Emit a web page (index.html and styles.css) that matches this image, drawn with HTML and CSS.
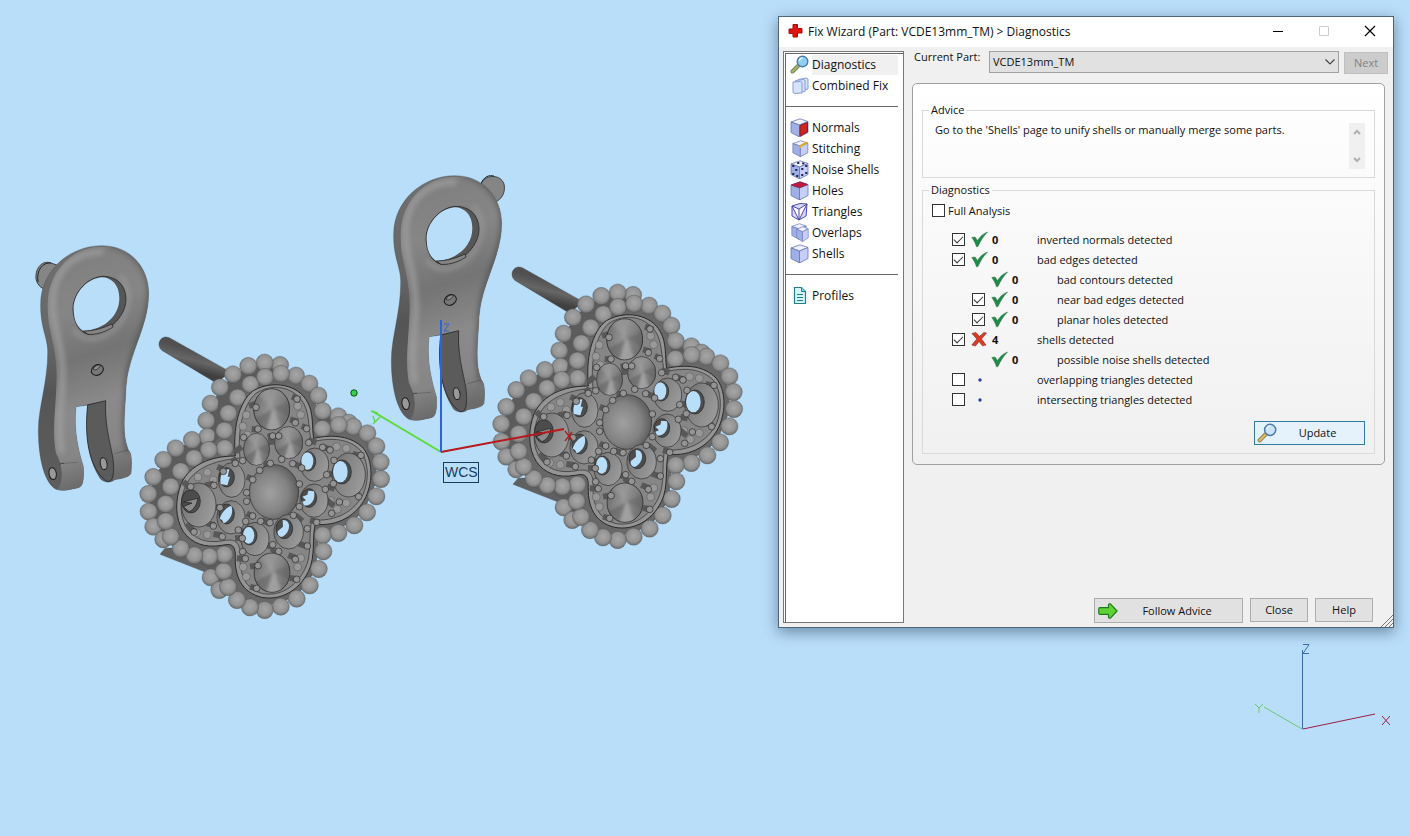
FILE: index.html
```html
<!DOCTYPE html>
<html lang="en">
<head>
<meta charset="utf-8">
<title>Fix Wizard</title>
<link rel="stylesheet" href="styles.css">
</head>
<body>
<main class="viewport">
<svg class="scene" width="1410" height="836" viewBox="0 0 1410 836" aria-label="Model view">
  <defs>
    <radialGradient id="bead" cx=".5" cy=".45" r=".6"><stop offset="0" stop-color="#a6a6a6"/><stop offset=".6" stop-color="#949494"/><stop offset=".85" stop-color="#767676"/><stop offset="1" stop-color="#555858"/></radialGradient>
    <radialGradient id="dome" cx=".42" cy=".52" r=".62"><stop offset="0" stop-color="#a0a0a0"/><stop offset=".6" stop-color="#828282"/><stop offset="1" stop-color="#555"/></radialGradient>
    <linearGradient id="cone" x1="0" y1=".3" x2="1" y2=".6"><stop offset="0" stop-color="#6e6e6e"/><stop offset=".45" stop-color="#949494"/><stop offset=".7" stop-color="#828282"/><stop offset="1" stop-color="#6c6c6c"/></linearGradient>
    <linearGradient id="cup" x1="0" y1="0" x2="1" y2=".5"><stop offset="0" stop-color="#6c6c6c"/><stop offset=".5" stop-color="#858585"/><stop offset="1" stop-color="#999"/></linearGradient>
    <linearGradient id="post" x1=".55" y1=".3" x2=".4" y2=".7"><stop offset="0" stop-color="#505050"/><stop offset=".5" stop-color="#666"/><stop offset="1" stop-color="#404040"/></linearGradient>
    <linearGradient id="face" x1="0" y1="0" x2=".15" y2="1"><stop offset="0" stop-color="#7c7c7c"/><stop offset=".3" stop-color="#868686"/><stop offset=".5" stop-color="#747474"/><stop offset=".7" stop-color="#8a8a8a"/><stop offset=".88" stop-color="#868686"/><stop offset="1" stop-color="#6b6b6b"/></linearGradient>
    <linearGradient id="side" x1="0" y1="0" x2="0" y2="1"><stop offset="0" stop-color="#707070"/><stop offset=".4" stop-color="#666"/><stop offset=".6" stop-color="#555"/><stop offset="1" stop-color="#5e5e5e"/></linearGradient>
    <filter id="soft" x="-20%" y="-20%" width="140%" height="140%"><feGaussianBlur stdDeviation="8"/></filter>
    <filter id="haze" x="-20%" y="-20%" width="140%" height="140%"><feGaussianBlur stdDeviation="5"/></filter>
    <clipPath id="leverClip"><path d="M245 50C330 50 385 110 386 190C386 290 325 370 318 470C314 560 305 610 325 660C335 670 336 690 333 730C325 745 300 745 281 750C281 700 257 640 257 512L168 530C160 600 175 660 190 710C192 745 190 770 175 773C150 778 130 785 112 779C135 750 125 700 108 670C95 600 108 540 110 440C110 340 80 300 83 220C86 120 160 50 245 50Z"/></clipPath>
    <clipPath id="coneClip"><ellipse cx="56" cy="64" rx="55" ry="63"/></clipPath>

    <symbol id="conic" viewBox="0 0 112 128" preserveAspectRatio="none">
      <ellipse fill="url(#cone)" cx="56" cy="64" rx="55" ry="63"/>
      <g clip-path="url(#coneClip)"><g filter="url(#haze)">
        <path fill="#585858" opacity=".5" d="M60 62L-10 100L30 150Z"/>
        <path fill="#b0b0b0" opacity=".6" d="M60 55L40 140L92 140Z"/>
        <path fill="#606060" opacity=".45" d="M60 60L130 30L130 100Z"/>
        <path fill="#a0a0a0" opacity=".5" d="M60 62L0 0L50 -20Z"/>
      </g></g>
      <ellipse fill="none" stroke="#2b2b2b" stroke-width="2.500" cx="56" cy="64" rx="54" ry="62"/>
    </symbol>

    <symbol id="lever" viewBox="0 0 450 810">
      <path class="edge" fill="url(#side)" d="M245 47C330 47 385 110 386 190C386 290 325 370 318 470C314 560 305 610 325 660C335 670 336 690 333 730C325 745 300 745 283 750C275 758 250 760 240 745C205 690 195 620 203 525L168 530C160 600 175 660 190 710C192 745 190 770 175 773C150 778 130 785 108 778C75 760 55 690 55 600C55 530 85 450 83 360C82 320 60 290 62 220C64 120 150 47 245 47Z"/>
      <g clip-path="url(#leverClip)">
        <path fill="url(#face)" d="M60 40H400V790H60Z"/>
        <path class="shine" d="M250 66C150 66 98 130 98 220C98 300 130 340 128 440C126 530 110 590 126 670"/>
        <path class="halo" d="M300 135C350 190 325 300 230 325C200 330 175 320 160 300"/>
        <path class="rimdark" d="M270 44C350 60 394 130 388 200C384 290 324 370 320 470C316 560 307 610 325 665"/>
      </g>
      <path class="line" fill="#5b5b5b" d="M203 525L257 512C252 600 280 660 281 710C281 735 278 756 262 755C215 725 190 640 203 525Z"/>
      <path class="line" fill="#565656" d="M159 240C157 195 195 145 245 139C290 138 318 165 318 210C316 262 262 312 205 313C175 306 162 275 159 240Z"/>
      <path fill="#b9defa" d="M161 240C159 195 196 147 245 142C275 142 298 165 298 205C298 260 250 300 190 303C170 290 162 270 161 240Z"/>
      <path class="line" fill="#858585" d="M190 303C225 303 255 292 276 282L279 291C250 310 225 314 204 313Z"/>
      <ellipse class="line thick" fill="#777" cx="232" cy="420" rx="19" ry="15" transform="rotate(-32 232 420)"/>
      <path class="line" fill="#8e8e8e" d="M219 418C228 424 240 412 242 405C230 404 222 410 219 418Z"/>
      <ellipse class="line thick" fill="#999" cx="98" cy="731" rx="11" ry="18" transform="rotate(-10 98 731)"/>
      <ellipse class="line thick" fill="#999" cx="251" cy="701" rx="10" ry="18" transform="rotate(-10 251 701)"/>
      <path class="line" fill="none" d="M118 703Q126 698 132 700"/>
      <path class="line" fill="none" opacity=".35" d="M132 700L174 697M283 671L324 660"/>
    </symbol>

    <symbol id="flower" viewBox="0 0 810 900">
      <path class="edge" fill="url(#post)" d="M118 23L300 125L260 160L97 62C75 45 92 12 118 23Z"/>
      <path class="edge" fill="#606060" d="M105 655L90 673L235 730L300 700L210 650Z"/>
      <path fill="#5c5c5c" d="M450 105L404 98L309 133L242 221L230 320L137 355L70 441L56 545L100 630L240 720L268 780L330 810L404 830L500 800L560 717L560 616L673 576L720 499L732 396L702 320L626 265L558 243L528 161Z"/>
      <g class="beads">
        <circle cx="450" cy="105"/><circle cx="404" cy="98"/><circle cx="355" cy="108"/><circle cx="309" cy="133"/><circle cx="270" cy="172"/><circle cx="242" cy="221"/><circle cx="229" cy="272"/><circle cx="232" cy="320"/><circle cx="186" cy="330"/><circle cx="137" cy="355"/><circle cx="100" cy="390"/><circle cx="70" cy="441"/><circle cx="55" cy="492"/><circle cx="56" cy="545"/><circle cx="70" cy="590"/><circle cx="100" cy="628"/><circle cx="242" cy="742"/><circle cx="268" cy="780"/><circle cx="625" cy="259"/><circle cx="656" cy="278"/>
      </g>
      <path fill="#5c5c5c" d="M320 160L265 215L252 330L140 385L97 440L87 540L107 600L107 522L152 424L236 360L283 302L323 203L405 141L370 130Z"/>
      <path fill="#686868" d="M283 302L323 203L405 141L498 147L555 197L567 297L670 300L730 349L743 447L701 547L625 599L568 616L556 717L500 796L404 830L321 800L283 724L283 674L193 666L122 610L107 522L152 424L236 360Z"/>
      <g class="beads">
        <circle cx="284" cy="355"/><circle cx="283" cy="302"/><circle cx="295" cy="250"/><circle cx="323" cy="203"/><circle cx="361" cy="163"/><circle cx="405" cy="141"/><circle cx="498" cy="137"/><circle cx="453" cy="131"/><circle cx="538" cy="161"/><circle cx="565" cy="197"/><circle cx="578" cy="243"/><circle cx="577" cy="297"/><circle cx="670" cy="290"/><circle cx="626" cy="285"/><circle cx="712" cy="310"/><circle cx="739" cy="349"/><circle cx="752" cy="396"/><circle cx="753" cy="447"/><circle cx="739" cy="499"/><circle cx="711" cy="547"/><circle cx="673" cy="586"/><circle cx="625" cy="609"/><circle cx="578" cy="616"/><circle cx="580" cy="664"/><circle cx="566" cy="717"/><circle cx="539" cy="766"/><circle cx="500" cy="806"/><circle cx="452" cy="830"/><circle cx="404" cy="840"/><circle cx="360" cy="832"/><circle cx="321" cy="810"/><circle cx="294" cy="771"/><circle cx="281" cy="724"/><circle cx="283" cy="674"/><circle cx="238" cy="680"/><circle cx="193" cy="676"/><circle cx="152" cy="656"/><circle cx="122" cy="620"/><circle cx="107" cy="574"/><circle cx="107" cy="522"/><circle cx="122" cy="470"/><circle cx="152" cy="424"/><circle cx="192" cy="385"/><circle cx="236" cy="360"/>
      </g>
      <path class="plate" d="M316 378C308 300 325 215 370 182C430 148 505 165 532 215C552 250 545 290 551 325C610 312 665 318 700 355C728 390 730 450 708 500C682 555 625 590 556 583C545 620 558 680 535 725C505 785 450 812 395 802C335 787 312 740 316 670C312 640 300 642 275 646C225 655 185 640 160 605C135 565 134 510 154 460C180 405 240 378 316 378Z"/>
      <path class="plate inner" d="M330 384C322 300 338 225 378 190C430 156 494 172 522 222C540 258 534 300 545 336C605 321 658 326 692 362C716 395 718 448 700 492C672 545 620 575 545 570C535 615 547 672 526 715C496 774 448 799 400 791C346 778 326 735 331 665C325 625 302 628 275 633C230 640 195 628 172 597C148 560 148 512 167 467C190 418 245 392 330 384Z"/>
      <g class="grains">
        <circle cx="349" cy="255"/><circle cx="339" cy="289"/><circle cx="352" cy="315"/><circle cx="503" cy="228"/><circle cx="512" cy="254"/><circle cx="620" cy="350"/><circle cx="649" cy="355"/><circle cx="204" cy="441"/><circle cx="232" cy="427"/><circle cx="232" cy="614"/><circle cx="200" cy="608"/><circle cx="622" cy="538"/><circle cx="649" cy="519"/><circle cx="349" cy="740"/><circle cx="340" cy="711"/><circle cx="512" cy="684"/><circle cx="503" cy="711"/><circle cx="350" cy="650"/><circle cx="602" cy="512"/><circle cx="250" cy="450"/>
      </g>
      <g class="stubs">
        <path d="M357 228l28-9M486 200l25 9M480 268l24 7M515 288l20 8M365 297l20 2M535 330l24 8M575 350l27 9M668 372l24 6M665 485l24 12M590 510l22 18M540 570l26 7M505 640l22 8M475 675l24 10M480 744l24 4M360 710l22-4M360 770l20 6M320 685l30 2M315 625l24-1M250 612l26 4M170 580l22 25M160 455l20 20M225 466l26-5M262 410l22 10M308 384l12 18M350 440l20 8M335 350l-20 16M400 402l22 0M420 310l6 34M490 400l26 12M595 430l24 7M592 470l22 6M250 530l22 4M345 485l22 8M350 550l22 12M395 570l26 12M410 645l22 8M425 655l20 20M495 555l22 18M230 580l24 5M340 605l-20-8"/>
      </g>
      <ellipse class="setting dome" cx="432" cy="486" rx="74" ry="82"/>
      <use href="#conic" x="369" y="174" width="112" height="128"/>
      <use href="#conic" x="339" y="308" width="81" height="100"/>
      <use href="#conic" x="432" y="288" width="88" height="100"/>
      <use href="#conic" x="370" y="667" width="112" height="122"/>
      <g class="setting cups">
        <ellipse cx="656" cy="435" rx="50" ry="66"/><ellipse cx="554" cy="404" rx="42" ry="50"/><ellipse cx="552" cy="512" rx="42" ry="50"/><ellipse cx="305" cy="450" rx="40" ry="52"/><ellipse cx="303" cy="562" rx="42" ry="50"/><ellipse cx="375" cy="627" rx="42" ry="50"/><ellipse cx="476" cy="605" rx="44" ry="52"/><ellipse cx="206" cy="525" rx="52" ry="66"/>
      </g>
      <g class="walls">
        <ellipse cx="636" cy="426" rx="28" ry="36"/><ellipse cx="535" cy="394" rx="22" ry="29"/><ellipse cx="537" cy="504" rx="23" ry="28"/><ellipse cx="290" cy="442" rx="23" ry="29"/><ellipse cx="290" cy="552" rx="23" ry="30"/><ellipse cx="359" cy="617" rx="22" ry="28"/><ellipse cx="463" cy="596" rx="25" ry="30"/><ellipse cx="183" cy="514" rx="28" ry="35"/>
      </g>
      <g class="openings">
        <ellipse cx="631" cy="425" rx="22" ry="32"/><ellipse cx="532" cy="393" rx="18" ry="26"/><path d="M517 500L532 494L535 482L552 484C558 512 540 530 522 526L517 515L528 511Z"/><path d="M272 462C268 435 280 418 298 418L293 440L300 440L292 466Z"/><path d="M269 566C275 548 286 534 304 527C312 550 300 572 281 580L276 570Z"/><ellipse cx="356" cy="616" rx="17" ry="25"/><path d="M443 604L459 590L458 570C484 568 484 607 456 621C447 621 442 614 443 604Z"/>
      </g>
      <path class="line" fill="#8b8b8b" d="M160 516L203 505C202 525 190 540 177 545L160 530L186 519Z"/>
      <g class="prongs">
        <circle cx="378" cy="232"/><circle cx="501" cy="207"/><circle cx="384" cy="297"/><circle cx="496" cy="278"/><circle cx="530" cy="296"/><circle cx="428" cy="318"/><circle cx="446" cy="318"/><circle cx="341" cy="322"/><circle cx="536" cy="338"/><circle cx="338" cy="392"/><circle cx="316" cy="400"/><circle cx="421" cy="400"/><circle cx="455" cy="388"/><circle cx="389" cy="421"/><circle cx="488" cy="401"/><circle cx="515" cy="414"/><circle cx="280" cy="424"/><circle cx="368" cy="449"/><circle cx="600" cy="360"/><circle cx="578" cy="352"/><circle cx="693" cy="376"/><circle cx="612" cy="391"/><circle cx="590" cy="434"/><circle cx="610" cy="461"/><circle cx="586" cy="478"/><circle cx="508" cy="462"/><circle cx="686" cy="500"/><circle cx="628" cy="516"/><circle cx="508" cy="530"/><circle cx="605" cy="550"/><circle cx="490" cy="556"/><circle cx="560" cy="577"/><circle cx="532" cy="596"/><circle cx="532" cy="648"/><circle cx="420" cy="578"/><circle cx="428" cy="644"/><circle cx="446" cy="664"/><circle cx="496" cy="688"/><circle cx="500" cy="748"/><circle cx="384" cy="707"/><circle cx="380" cy="775"/><circle cx="346" cy="686"/><circle cx="338" cy="665"/><circle cx="337" cy="625"/><circle cx="325" cy="600"/><circle cx="277" cy="620"/><circle cx="192" cy="606"/><circle cx="250" cy="588"/><circle cx="270" cy="533"/><circle cx="252" cy="466"/><circle cx="182" cy="470"/><circle cx="350" cy="488"/><circle cx="350" cy="514"/><circle cx="368" cy="558"/><circle cx="347" cy="574"/><circle cx="392" cy="574"/>
      </g>
    </symbol>
  </defs>

  <path class="edge" fill="#858585" d="M36 279C35 267 43 260 51 263L62 267V290L47 290Q38 288 36 279Z"/>
  <path class="tab" d="M38 282C36 270 43 262 51 263"/>
  <path class="edge" fill="#858585" d="M481 184C484 175 500 173 504 184C506 193 501 200 495 202Z"/>
  <path class="tab" d="M481 184C484 176 489 175 494 176"/>
  <use href="#lever" x="20" y="230" width="150" height="270"/>
  <use href="#lever" x="373" y="160" width="150" height="270"/>
  <use href="#flower" x="130" y="330" width="270" height="300"/>
  <use href="#flower" x="483" y="260" width="270" height="300"/>

  <g fill="none" stroke-width="2">
    <path stroke="#5adb34" d="M441 452L372 411"/>
    <path stroke="#5adb34" stroke-width="1.300" d="M373 416L375 422L380 417M375 422L373 424M371 411L378 413"/>
    <path stroke="#b9181c" d="M441 452L564 429"/>
    <path stroke="#b9181c" stroke-width="1.300" d="M565 431L572 440M572 432L565 441"/>
    <path stroke="#2f62d4" d="M441 452V320"/>
    <path stroke="#2f62d4" stroke-width="1" d="M444 324H449L444 331H449"/>
  </g>
  <circle cx="354" cy="393" r="3.200" fill="#39cf4a" stroke="#0d4f18"/>
  <rect x="443.500" y="462.500" width="35" height="20" fill="none" stroke="#1a3a5c"/>
  <text class="wcs" x="445" y="477">WCS</text>
</svg>

<svg class="triad" width="140" height="92" viewBox="0 0 140 92" aria-label="Orientation axes" fill="none">
  <path stroke="#3a6fab" d="M52.500 86V7M53 1.500H59L53 10.500H59"/>
  <path stroke="#6cc86c" d="M52 86L14 64M5 61L9 65L13 61M9 65V70"/>
  <path stroke="#9c1e46" d="M53 86L125 71M132 73L140 82M140 73L132 82"/>
</svg>

<section class="dialog" role="dialog" aria-labelledby="dialog-title">
  <header class="titlebar">
    <svg width="15" height="14" viewBox="0 0 15 14"><path fill="#e01212" stroke="#a80c0c" d="M5 .5h4.500v4H14v4.500H9.500V13H5V9.500H1V5h4z"/></svg>
    <h1 id="dialog-title">Fix Wizard (Part: VCDE13mm_TM) &gt; Diagnostics</h1>
    <button class="winbtn" aria-label="Minimize"><svg width="12" height="12"><path stroke="#000" d="M1 6.500h10"/></svg></button>
    <button class="winbtn" aria-label="Maximize" disabled><svg width="12" height="12"><path fill="none" stroke="#ccc" d="M1.500 1.500h9v9h-9z"/></svg></button>
    <button class="winbtn" aria-label="Close window"><svg width="12" height="12"><path stroke="#000" stroke-width="1.200" d="M1 1l10 10M11 1L1 11"/></svg></button>
  </header>
  <div class="body">
    <nav class="sidebar">
      <svg width="0" height="0" class="defs"><defs>
        <g id="cube" stroke="#6a74b4" stroke-width=".8" stroke-linejoin="round"><path fill="#eef1ff" d="M1 4L10 .8L18 3.500L9.500 7z"/><path fill="#9fb0e6" d="M1 4L9.500 7V19L1 14.500z"/><path fill="#c4cef6" d="M9.500 7L18 3.500V14.500L9.500 19z"/></g>
        <g id="lens"><path stroke="#6d7f55" stroke-width="4" stroke-linecap="round" d="M2.500 16.500L8 11"/><path class="handle" stroke-width="2.400" stroke-linecap="round" d="M2.500 16.500L8 11"/><circle cx="12.500" cy="6.500" r="5.300" class="glass" stroke="#4b7ba8" stroke-width="1.400"/><path fill="none" stroke="#e6f6ff" stroke-width="1.300" d="M9.500 6a3 3 0 0 1 3-3"/></g>
      </defs></svg>
      <button class="item current"><svg viewBox="0 0 19 19"><use href="#lens"/></svg><span>Diagnostics</span></button>
      <button class="item"><svg viewBox="0 0 19 19"><g fill="#d5e3fb" stroke="#7b93cc" stroke-width=".9"><path d="M8.500 3.500L16.500 2l1.500 1v10L10 15z"/><path d="M5.500 4.500l8-1 1.500 1v11L7 16.500z"/><path d="M3 6L10.500 5.500l1.500 1v10.500l-7.500.5-1.500-1z"/></g></svg><span>Combined Fix</span></button>
      <hr>
      <button class="item"><svg viewBox="0 0 19 19"><use href="#cube"/><path fill="#cf2424" stroke="#921a1a" d="M10 7.500L17.500 4.500V14L10 18z"/></svg><span>Normals</span></button>
      <button class="item"><svg viewBox="0 0 19 19"><g transform="translate(2 1) scale(.88)"><use href="#cube"/></g><path fill="none" stroke="#d9ab2d" stroke-width="2" d="M10 9V7L17 3.500"/></svg><span>Stitching</span></button>
      <button class="item"><svg viewBox="0 0 19 19"><use href="#cube"/><path stroke="#1b1f4e" stroke-width="2" stroke-linecap="round" d="M3 6h.5M8 3h.5M13 3.500h.5M6 10h.5M3 14h.5M7 16h.5M12 9h.5M16 6h.5M16 13h.5M12 15h.5"/></svg><span>Noise Shells</span></button>
      <button class="item"><svg viewBox="0 0 19 19"><use href="#cube"/><path fill="#c8193c" stroke="#8c2348" d="M1.500 4L10 1L17.500 3.500L9.500 6.700z"/></svg><span>Holes</span></button>
      <button class="item"><svg viewBox="0 0 19 19"><path fill="#d9d9ff" stroke="#4a48a8" stroke-linejoin="round" d="M2 4L9 7L17 2L16 14L9 18L2 14zM9 7V18M2 4L9 18L17 2M2 4L10 1.500L17 2"/></svg><span>Triangles</span></button>
      <button class="item"><svg viewBox="0 0 19 19"><g transform="translate(1 0) scale(.84 .86)"><use href="#cube"/></g><g transform="translate(6 3) scale(.68 .82)"><use href="#cube"/></g></svg><span>Overlaps</span></button>
      <button class="item"><svg viewBox="0 0 19 19"><use href="#cube"/></svg><span>Shells</span></button>
      <hr>
      <button class="item"><svg viewBox="0 0 19 19"><path fill="#d4f5f7" stroke="#237f8c" stroke-width="1.200" d="M4.500 1.500h7l4 4v12h-11z"/><path fill="#8fd6dc" stroke="#237f8c" d="M11.500 1.500v4h4M7 8.500h6M7 11.500h6M7 14.500h6"/></svg><span>Profiles</span></button>
    </nav>
    <div class="content">
      <div class="partbar">
        <label for="part">Current Part:</label>
        <div class="selectbox">
          <select id="part"><option>VCDE13mm_TM</option></select>
          <svg width="10" height="6"><path fill="none" stroke="#444" stroke-width="1.200" d="M.5.5L5 5L9.500.5"/></svg>
        </div>
        <button class="btn next" disabled>Next</button>
      </div>
      <div class="panel">
        <fieldset class="advice">
          <legend>Advice</legend>
          <p>Go to the 'Shells' page to unify shells or manually merge some parts.</p>
          <div class="scroll"><svg width="8" height="6"><path d="M1 5L4 2L7 5"/></svg><svg width="8" height="6"><path d="M1 1L4 4L7 1"/></svg></div>
        </fieldset>
        <fieldset class="diag">
          <legend>Diagnostics</legend>
          <svg width="0" height="0" class="defs"><defs>
            <g id="ok"><path fill="#1f8a4a" stroke="#3c7d52" stroke-width=".6" d="M.8 6.500L4 6L6.500 9.500C9 5.500 12.500 2.500 16.500 1C12.500 5 9.500 10 7 15.500L5.500 15.800C4.500 12.500 3 9.500.8 6.500z"/></g>
            <g id="bad"><path fill="#dc3a26" stroke="#8f3a35" stroke-width=".7" d="M1 2.500L5 1.500L8.500 5.500L13 1.500L15.500 2L10.500 8L15 14L11.500 14.800L8 10.500L4.500 15L.8 14L5.800 8z"/></g>
            <circle id="dot" cx="9" cy="9" r="1.700" fill="#2c3fb0"/>
          </defs></svg>
          <label class="full"><input type="checkbox"> Full Analysis</label>
          <ul class="checks">
            <li><label><input type="checkbox" checked><svg><use href="#ok"/></svg><b>0</b><span>inverted normals detected</span></label></li>
            <li><label><input type="checkbox" checked><svg><use href="#ok"/></svg><b>0</b><span>bad edges detected</span></label></li>
            <li class="sub"><div><i></i><svg><use href="#ok"/></svg><b>0</b><span>bad contours detected</span></div></li>
            <li class="sub"><label><input type="checkbox" checked><svg><use href="#ok"/></svg><b>0</b><span>near bad edges detected</span></label></li>
            <li class="sub"><label><input type="checkbox" checked><svg><use href="#ok"/></svg><b>0</b><span>planar holes detected</span></label></li>
            <li><label><input type="checkbox" checked><svg><use href="#bad"/></svg><b>4</b><span>shells detected</span></label></li>
            <li class="sub"><div><i></i><svg><use href="#ok"/></svg><b>0</b><span>possible noise shells detected</span></div></li>
            <li><label><input type="checkbox"><svg><use href="#dot"/></svg><b></b><span>overlapping triangles detected</span></label></li>
            <li><label><input type="checkbox"><svg><use href="#dot"/></svg><b></b><span>intersecting triangles detected</span></label></li>
          </ul>
          <button class="btn update"><svg class="tan" viewBox="0 0 19 19"><use href="#lens"/></svg><span>Update</span></button>
        </fieldset>
      </div>
      <footer class="actions">
        <button class="btn follow"><svg viewBox="0 0 21 18"><path fill="#5fd336" stroke="#1d7a16" stroke-width="1.200" stroke-linejoin="round" d="M2 5.500h9V3q0-2 2-1.500l7 7.500l-7 7.500q-2 .5-2-1.500v-2.500H2Q.8 12.500.8 11V7Q.8 5.500 2 5.500z"/></svg><span>Follow Advice</span></button>
        <button class="btn">Close</button>
        <button class="btn">Help</button>
      </footer>
    </div>
  </div>
  <svg class="grip" width="12" height="12"><path stroke="#777" d="M0 12L12 0M4 12L12 4M8 12L12 8"/></svg>
</section>
</main>
</body>
</html>
```
FILE: styles.css
```css
* { box-sizing: border-box; }
body { margin: 0; font-family: "Open Sans", "Noto Sans", sans-serif; font-size: 11px; color: #111; }
.viewport { position: relative; min-height: 100vh; background: #b9defa; overflow: hidden; }
.scene { position: absolute; top: 0; left: 0; }
.triad { position: absolute; right: 20px; bottom: 101px; }
.wcs { font: 14px "Liberation Sans", sans-serif; fill: #1a3a5c; }

/* model shading */
.edge { stroke: #3c4247; stroke-width: 1; }
.line { stroke: #1c1c1c; stroke-width: 2; }
.thick { stroke-width: 3; }
.tab { fill: none; stroke: #222; stroke-width: 1; }
.shine { fill: none; stroke: #a0a0a0; stroke-width: 20; opacity: .7; filter: url(#soft); }
.halo { fill: none; stroke: #9c9c9c; stroke-width: 14; opacity: .6; filter: url(#soft); }
.rimdark { fill: none; stroke: #4c4c4c; stroke-width: 14; opacity: .7; filter: url(#soft); }
.beads circle { r: 26px; fill: url(#bead); stroke: #4c5052; stroke-width: 1; }
.grains circle { r: 12px; fill: #989898; stroke: #606060; stroke-width: 2; }
.plate { fill: #949494; stroke: #2a2a2a; stroke-width: 3; }
.plate.inner { fill: #868686; stroke-width: 2; }
.stubs path { stroke: #585858; stroke-width: 18; fill: none; }
.setting, .setting ellipse { stroke: #2b2b2b; stroke-width: 2; }
.dome { fill: url(#dome); }
.cups ellipse { fill: url(#cup); }
.walls ellipse { fill: #4c4c4c; stroke: #222; stroke-width: 2; }
.openings { fill: #b9defa; }
.prongs circle { r: 10px; fill: #949494; stroke: #262626; stroke-width: 2; }

/* window */
.dialog { position: absolute; top: 16px; right: 16px; width: 616px; min-height: 612px; display: flex; flex-direction: column; background: #f0f0f0; border: 1px solid #4e6678; box-shadow: 0 4px 14px rgba(0, 30, 60, .45); }
.titlebar { display: flex; align-items: center; height: 30px; padding: 0 0 2px 9px; background: #fff; }
.titlebar h1 { flex: 1; margin: 0 0 0 5px; font-size: 12px; font-weight: 400; white-space: nowrap; }
.winbtn { width: 46px; height: 28px; padding: 0; border: 0; background: none; display: grid; place-items: center; }
.body { flex: 1; display: flex; gap: 8px; padding: 4px 5px 4px 4px; }
.sidebar { width: 121px; padding: 2px 5px 2px 6px; background: #fff; border: 1px solid #777; box-shadow: inset 1px 1px #fff, inset 2px 2px #666, inset -1px -1px #fff; }
.defs { display: block; position: absolute; }
.item { display: flex; align-items: center; gap: 3px; width: 100%; height: 21px; padding: 0; border: 0; background: none; font: inherit; font-size: 12px; color: #111; text-align: left; white-space: nowrap; }
.item svg { width: 19px; height: 19px; flex: none; fill: none; }
.item span { flex: 1; line-height: 20px; }
.item.current span { background: #f0f0f0; }
.sidebar hr { height: 1px; margin: 10px 0 10px -4px; border: 0; background: #666; }
.handle { stroke: var(--handle, #a9b26c); }
.glass { fill: var(--glass, #8fcdf3); }
.tan { --handle: #e8b264; --glass: #c9e4f7; }
.content { flex: 1; display: flex; flex-direction: column; min-width: 0; }
.partbar { display: flex; align-items: flex-start; height: 32px; }
.partbar label { width: 77px; padding-left: 2px; line-height: 12px; }
.selectbox { position: relative; flex: 1; margin-right: 5px; }
.selectbox select { appearance: none; width: 100%; height: 22px; padding: 0 3px 2px; border: 1px solid #a0a0a0; border-radius: 0; background: #e1e1e1; font: inherit; color: #111; }
.selectbox svg { position: absolute; top: 8px; right: 4px; }
.btn { display: flex; align-items: center; justify-content: center; min-width: 58px; height: 24px; padding: 0 6px 1px; border: 1px solid #adadad; background: #e1e1e1; font: inherit; color: #111; }
.btn span { flex: 1; text-align: center; }
.btn svg { flex: none; width: 20px; height: 20px; fill: none; }
.btn.next { min-width: 44px; height: 22px; margin-top: 1px; background: #ccc; border-color: #bfbfbf; color: #838383; }
.panel { margin-right: 3px; padding: 19px 9px 10px; border: 1px solid #a0a0a0; border-radius: 5px; background: linear-gradient(#fff, #f0f0f0); }
fieldset { margin: 0; padding: 0; border: 1px solid #d9d9d9; min-width: 0; }
legend { margin-left: 6px; padding: 0 2px; line-height: 14px; }
.advice { height: 75px; }
.advice p { float: left; margin: 5px 0 0 12px; line-height: 16px; }
.scroll { float: right; display: flex; flex-direction: column; justify-content: space-between; align-items: center; width: 16px; height: 46px; margin: 6px 9px 0 0; padding: 6px 0; background: #f0f0f0; }
.scroll path { fill: none; stroke: #b0b0b0; stroke-width: 2; }
.diag { margin-top: 5px; padding: 5px 9px 8px; }
.diag legend { margin-left: -3px; }
input[type="checkbox"] { appearance: none; width: 13px; height: 13px; margin: 0; border: 1px solid #333; background: #fff; display: grid; place-items: center; }
input[type="checkbox"]:checked::after { content: ""; width: 8px; height: 4px; border: solid #333; border-width: 0 0 1px 1px; transform: translateY(-1px) rotate(-45deg); }
.full { display: flex; align-items: center; gap: 3px; height: 16px; }
.checks { list-style: none; margin: 11px 0 0; padding: 0 0 0 20px; }
.checks .sub { padding-left: 20px; }
.checks label, .checks div { display: grid; grid-template-columns: 19px 21px 45px 1fr; align-items: center; height: 20px; }
.checks svg { width: 18px; height: 17px; }
.btn.update { width: 111px; margin: 12px 0 0 auto; padding: 0 6px 1px 2px; border-color: #2d7d9f; background: #e5f1fb; }
.actions { display: flex; justify-content: flex-end; gap: 7px; margin: auto 15px 0 0; height: 25px; }
.btn.follow { width: 149px; height: 25px; padding: 0 6px 0 3px; }
.grip { position: absolute; right: 0; bottom: 0; }
```
